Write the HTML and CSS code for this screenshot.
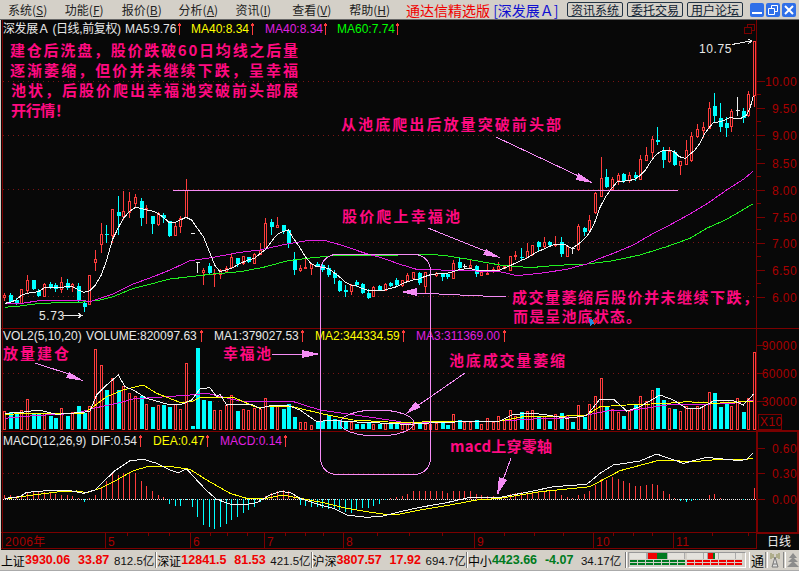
FILE: index.html
```html
<!DOCTYPE html>
<html lang="zh-CN">
<head>
    <meta charset="UTF-8">
    <title>通达信精选版 - 深发展A</title>
    <link rel="stylesheet" href="styles.css">
</head>
<body>

<div class="app">

    <!-- Menu and title bar -->
    <div class="menubar">
        <div class="menu">
            <span>系统(<u>S</u>)</span>
            <span>功能(<u>F</u>)</span>
            <span>报价(<u>B</u>)</span>
            <span>分析(<u>A</u>)</span>
            <span>资讯(<u>I</u>)</span>
            <span>查看(<u>V</u>)</span>
            <span>帮助(<u>H</u>)</span>
        </div>
        <div class="title"><b>通达信精选版</b> <em>[深发展Ａ]</em></div>
        <div class="links">
            <button>资讯系统</button>
            <button>委托交易</button>
            <button>用户论坛</button>
        </div>
        <div class="winbtns">
            <span class="winbtn"><svg width="14" height="14"><rect x="2" y="9" width="10" height="2" fill="#fff"/></svg></span>
            <span class="winbtn"><svg width="14" height="14"><path d="M5.5 5.5V2.5H11.5V8.5H9M2.5 5.5H8.500V11.500H2.500Z" fill="none" stroke="#fff"/></svg></span>
            <span class="winbtn close"><svg width="14" height="14"><path d="M3 3L11 11M11 3L3 11" stroke="#fff" stroke-width="2"/></svg></span>
        </div>
    </div>

    <!-- Chart panes: coordinates in the viewBox are page pixels -->
    <svg id="chart" class="chart" width="798" height="530" viewBox="1 20 798 530">
        <defs>
            <path id="up" d="M0.5 -5V6M-1.5 -2.500L0.5 -5L2.500 -2.500" class="uparrow"/>
        </defs>

        <g id="grid"></g>
        <g id="panes"></g>

        <!-- Pane headers -->
        <text x="3" y="33" class="hd white zh" textLength="118">深发展Ａ (日线,前复权)</text>
        <text x="125" y="33" class="hd white">MA5:9.76</text><use href="#up" x="179" y="29"/>
        <text x="191" y="33" class="hd yellow">MA40:8.34</text><use href="#up" x="252" y="29"/>
        <text x="265" y="33" class="hd magenta">MA40:8.34</text><use href="#up" x="325" y="29"/>
        <text x="337" y="33" class="hd green">MA60:7.74</text><use href="#up" x="397" y="29"/>

        <text x="3" y="340" class="hd white">VOL2(5,10,20)</text>
        <text x="86" y="340" class="hd white">VOLUME:820097.63</text><use href="#up" x="201" y="336"/>
        <text x="214" y="340" class="hd white">MA1:379027.53</text><use href="#up" x="302" y="336"/>
        <text x="315" y="340" class="hd yellow">MA2:344334.59</text><use href="#up" x="403" y="336"/>
        <text x="416" y="340" class="hd magenta">MA3:311369.00</text><use href="#up" x="504" y="336"/>

        <text x="3" y="445" class="hd white">MACD(12,26,9)</text>
        <text x="91" y="445" class="hd white">DIF:0.54</text><use href="#up" x="140" y="441"/>
        <text x="153" y="445" class="hd yellow">DEA:0.47</text><use href="#up" x="207" y="441"/>
        <text x="220" y="445" class="hd magenta">MACD:0.14</text><use href="#up" x="285" y="441"/>

        <!-- Price marks -->
        <text x="699" y="53" class="mark">10.75</text>
        <path d="M732 44.500L745 42L752 41M748 39L752 41L748 44" class="markline"/>
        <text x="39" y="320" class="mark">5.73</text>
        <path d="M63 315.500H82M78 313L82 315.500L78 318" class="markline"/>

        <!-- Annotations drawn on the chart -->
        <path d="M173 190.500H678" class="pen"/>
        <rect x="320.500" y="254.500" width="110" height="220" rx="16" class="pen"/>
        <ellipse cx="377" cy="423" rx="37" ry="13" class="pen"/>
        <path d="M496 137L585 179M428 228L495 255M506 297L460 295L417 293M35 363L75 376M272 354H305M465 373L410 411M511 458L498 494M417 294H412" class="pen"/>
        <polygon points="593,183 578,173 576,180" class="penhead"/>
        <polygon points="501,258 486,249 483,255" class="penhead"/>
        <polygon points="401,292 417,288 417,296" class="penhead"/>
        <polygon points="84,381 69,372 66,378" class="penhead"/>
        <polygon points="320,354 302,350 302,358" class="penhead"/>
        <polygon points="406,414 415,402 421,407" class="penhead"/>
        <polygon points="497,495 499,477 507,480" class="penhead"/>

        <text x="10" y="56" class="note" textLength="288">建仓后洗盘，股价跌破60日均线之后量</text>
        <text x="10" y="76" class="note" textLength="288">逐渐萎缩，但价并未继续下跌，呈幸福</text>
        <text x="11" y="96" class="note" textLength="287">池状，后股价爬出幸福池突破前头部展</text>
        <text x="11" y="116" class="note" textLength="59">开行情！</text>
        <text x="341" y="130" class="note" textLength="220">从池底爬出后放量突破前头部</text>
        <text x="342" y="222" class="note" textLength="118">股价爬上幸福池</text>
        <text x="512" y="303" class="note" textLength="246">成交量萎缩后股价并未继续下跌，</text>
        <text x="513" y="322" class="note" textLength="128">而是呈池底状态。</text>
        <text x="3" y="359" class="note" textLength="66">放量建仓</text>
        <text x="223" y="359" class="note" textLength="48">幸福池</text>
        <text x="449" y="366" class="note" textLength="116">池底成交量萎缩</text>
        <text x="450" y="452" class="note" textLength="102">macd上穿零轴</text>

        <polygon points="589,318 596,322 590,326" class="cursor-blue"/>
        <polygon points="593,319 598,321 594,325" class="cursor-red"/>

        <!-- Restore icon over the axis -->
        <path d="M747.500 27.500V24.500H754.500V30.500H751.500M744.500 27.500H751.500V33.500H744.500Z" class="restore"/>

        <text x="767" y="546" class="period">日线</text>
    </svg>

    <!-- Index status bar -->
    <div class="statusbar">
        <div class="idx"><span class="name">上证</span><b class="n1">3930.06</b><b class="n2">33.87</b><span class="amt">812.5亿</span></div>
        <div class="idx"><span class="name">深证</span><b class="n1">12841.5</b><b class="n2">81.53</b><span class="amt">421.5亿</span></div>
        <div class="idx"><span class="name">沪深</span><b class="n1">3807.57</b><b class="n2">17.92</b><span class="amt">694.7亿</span></div>
        <div class="idx idx-sz"><span class="name">中小</span><b class="n1">4423.66</b><b class="n2">-4.07</b><span class="amt">34.17亿</span></div>

        <div class="breadth">
            <div class="meter">
                <div class="cells"><i class="c1"></i><i class="c2"></i><i class="r1"></i><i class="g1"></i><i class="c2"></i><i class="c1"></i></div>
                <div class="dash dgreen"></div>
                <div class="dash dgreen"></div>
            </div>
            <div class="meter">
                <div class="cells"><i class="c1"></i><i class="c3"></i><i class="r2"></i><i class="g2"></i><i class="c3"></i><i class="c1"></i></div>
                <div class="dash dred"></div>
                <div class="dash dred"></div>
            </div>
        </div>

        <span class="tool tong">通</span>
        <span class="tool"><svg width="14" height="16"><path d="M7 5L4 15H10ZM5 12H9" fill="#ddd" stroke="#777"/><path d="M3 1V7M11 1V7M5 2V6M9 2V6" stroke="#8a8a50"/></svg></span>
        <span class="tool"><svg width="14" height="16"><path d="M7 1L11 6H3ZM7 5L12 10H2ZM7 9L13 15H1Z" fill="#8c8c8c"/></svg></span>
        <span class="tool last"><svg width="5" height="16"><path d="M2.500 1V14" stroke="#006"/><rect x="1" y="3" width="3" height="5" fill="#00c"/></svg></span>
    </div>
</div>

<script src="script.js"></script>
</body>
</html>
```

FILE: styles.css
```css
/* Basic Styling */
body {
    margin: 0;
    background-color: #fff;
    font-family: "Liberation Sans", "Noto Sans CJK SC", sans-serif;
    font-size: 12px;
    color: #000;
}

.app {
    width: 799px;
    height: 570px;
    display: flex;
    flex-direction: column;
    background-color: #d4d0c8;
    border-bottom: 1px solid #aaa;
    overflow: hidden;
}

/* Menu and title bar */
.menubar {
    height: 19px;
    flex: none;
    display: flex;
    align-items: center;
    border-bottom: 1px solid #666;
}

.menu {
    width: 406px;
    display: flex;
    padding-left: 8px;
    box-sizing: border-box;
}

.menu span {
    width: 57px;
    font-family: "Noto Sans CJK SC", sans-serif;
    font-size: 12px;
    white-space: nowrap;
    color: #222;
}

.title {
    width: 161px;
    font-family: "Noto Sans CJK SC", sans-serif;
    font-size: 14px;
    white-space: nowrap;
}

.title b {
    font-weight: normal;
    color: #f00000;
}

.title em {
    font-style: normal;
    color: #1010d0;
}

.links {
    display: flex;
    gap: 4px;
    width: 183px;
}

.links button {
    width: 56px;
    height: 15px;
    padding: 0;
    font-family: "Noto Sans CJK SC", sans-serif;
    font-size: 12px;
    line-height: 13px;
    color: #123;
    background-color: #d4d0c8;
    border: 1px solid #234;
    border-radius: 2px;
}

.winbtns {
    display: flex;
    gap: 2px;
}

.winbtn {
    width: 14px;
    height: 14px;
    display: block;
    background-color: #2f6fe8;
    border-radius: 2px;
}

/* Chart */
.chart {
    display: block;
    flex: none;
    margin-left: 1px;
    background-color: #080808;
    shape-rendering: crispEdges;
}

.chart text {
    font-family: "Liberation Sans", "Noto Sans CJK SC", sans-serif;
}

.hd {
    font-size: 12px;
}

.white { fill: #e8e8e8; }
.yellow { fill: #ffff00; }
.magenta { fill: #e020e0; }
.green { fill: #00ff00; }

.uparrow {
    fill: none;
    stroke: #ff3c3c;
}

.mark {
    font-size: 12px;
    letter-spacing: 0.6px;
    fill: #e8e8e8;
}

.markline {
    fill: none;
    stroke: #e8e8e8;
}

.pen {
    fill: none;
    stroke: #f58cf5;
}

.penhead {
    fill: #f58cf5;
}

.chart .note {
    font-family: "Noto Sans CJK SC", sans-serif;
    font-size: 15px;
    font-weight: 700;
    fill: #ff0a80;
}

.cursor-blue { fill: #2090e0; }
.cursor-red { fill: #e02020; }

.restore {
    fill: none;
    stroke: #7a0000;
}

.chart .period {
    font-family: "Noto Sans CJK SC", sans-serif;
    font-size: 12px;
    fill: #eee;
}

/* Drawn by script.js */
.sep { stroke: #7a0000; fill: none; }
.box { stroke: #7a0000; stroke-width: 2; fill: none; }
.dots { stroke: #7a1414; stroke-dasharray: 1 4; }
.zero { stroke: #eee; stroke-dasharray: 1 1; }
.tick { stroke: #7a0000; }
.axis { font-size: 12px; letter-spacing: 0.4px; fill: #a80000; }
.stick { stroke: #ff3c3c; fill: none; }
.body-r { stroke: #ff3c3c; fill: #080808; }
.body-c { fill: #00ffff; stroke: none; }
.stick-c { stroke: #00ffff; }
.stick-w { stroke: #f0f0f0; }
.ln { fill: none; stroke-width: 1; }
.ln-w { stroke: #f4f4f4; }
.ln-y { stroke: #ffff00; }
.ln-m { stroke: #e020e0; }
.ln-g { stroke: #20f020; }

/* Status bar */
.statusbar {
    flex: 1;
    display: flex;
    align-items: center;
    padding-left: 1px;
    white-space: nowrap;
}

.idx {
    width: 155.300px;
    height: 16px;
    display: flex;
    align-items: center;
    flex: none;
    border-right: 1px solid #777;
    box-shadow: 1px 0 0 #fff;
    box-sizing: border-box;
}

.idx + .idx {
    padding-left: 1px;
}

.idx-sz { width: 159px; }

.name {
    width: 24px;
    font-family: "Noto Sans CJK SC", sans-serif;
    font-size: 12px;
    letter-spacing: -0.2px;
}

.n1 {
    width: 53px;
    font-size: 12.500px;
    color: #f00000;
}

.n2 {
    width: 36px;
    font-size: 12.500px;
    color: #f00000;
}

.amt {
    font-size: 11.500px;
    color: #111;
}

.idx-sz b {
    color: #007a20;
}

.breadth {
    width: 114px;
    height: 14px;
    margin-left: 2px;
    padding: 0 1px;
    flex: none;
    display: flex;
    gap: 2px;
    border: 1px solid #999;
    border-right-color: #fff;
    border-bottom-color: #fff;
}

.meter {
    width: 55px;
}

.cells {
    height: 6px;
    display: flex;
    background-color: #e4e2dc;
}

.cells i { display: block; border-right: 1px solid #aaa; box-sizing: border-box; }
.c1 { width: 17px; }
.c2 { width: 1px; }
.c3 { width: 4px; }
.r1 { width: 9px; background-color: #f00000; border: 0 !important; }
.g1 { width: 10px; background-color: #007a20; border: 0 !important; }
.r2 { width: 5px; background-color: #f00000; border: 0 !important; }
.g2 { width: 2px; background-color: #007a20; border: 0 !important; }

.dash {
    height: 2px;
    margin-top: 1px;
}

.dgreen { background: repeating-linear-gradient(90deg, #007a20 0 7px, transparent 7px 8px); }
.dred { background: repeating-linear-gradient(90deg, #f00000 0 7px, transparent 7px 8px); }

.tool {
    width: 15px;
    height: 16px;
    margin-left: 1px;
    display: flex;
    align-items: center;
    justify-content: center;
    flex: none;
    border-left: 1px solid #fff;
    border-right: 1px solid #888;
}

.tong {
    margin-left: 3px;
    font-family: "Noto Sans CJK SC", sans-serif;
    font-size: 13px;
}

.last {
    width: 5px;
    margin-left: 2px;
    border-right: 0;
}
```

FILE: script.js
```js
// Chart data is kept in 3x pixel units: x = offset + v / 3, y = top + v / 3
const NS = 'http://www.w3.org/2000/svg';
const grid = document.getElementById('grid');
const panes = document.getElementById('panes');

function add(parent, tag, attrs, text) {
    const el = document.createElementNS(NS, tag);
    for (const key in attrs) el.setAttribute(key, attrs[key]);
    if (text) el.textContent = text;
    parent.appendChild(el);
    return el;
}

function hline(y, x1, x2, cls) {
    add(grid, 'line', { x1: x1, x2: x2, y1: y + 0.5, y2: y + 0.5, class: cls });
}

function vline(x, y1, y2, cls) {
    add(grid, 'line', { x1: x + 0.5, x2: x + 0.5, y1: y1, y2: y2, class: cls });
}

// Frame, dotted grid and axes
[81, 135, 189, 242, 296, 373, 401, 473].forEach(y => hline(y, 3, 756, 'dots'));
hline(499, 3, 756, 'zero');
hline(328, 1, 799, 'sep');
hline(431, 1, 757, 'sep');
hline(532, 1, 799, 'sep');
hline(548, 1, 757, 'sep');
vline(2, 20, 549, 'sep');
vline(756, 20, 549, 'sep');
add(grid, 'rect', { x: 757, y: 431, width: 41, height: 102, class: 'box' });

// Price, volume and MACD scales
const scales = [
    ['10.00', 81], ['9.50', 108], ['9.00', 135], ['8.50', 163], ['8.00', 190],
    ['7.50', 217], ['7.00', 243], ['6.50', 270], ['6.00', 297],
    ['90000', 345], ['60000', 373], ['30000', 401],
    ['0.60', 448], ['0.30', 473], ['0.00', 499]
];
scales.forEach(([label, y]) => {
    add(grid, 'text', { x: 797, y: y + 5, 'text-anchor': 'end', class: 'axis' }, label);
    hline(y, 757, 765, 'tick');
    if (y < 300 && y > 90) hline(y - 14, 757, 761, 'tick');
});
add(grid, 'rect', { x: 758.5, y: 414.5, width: 23, height: 15, class: 'sep' });
add(grid, 'text', { x: 760, y: 426, class: 'axis' }, 'X10');

// Date axis
const months = [['2006年', 2, 0], ['5', 105], ['6', 190], ['7', 264], ['8', 343], ['9', 474], ['10', 593], ['11', 673]];
months.forEach(([label, x]) => {
    if (x > 2) vline(x, 533, 548, 'tick');
    add(grid, 'text', { x: x + 3, y: 546, class: 'axis' }, label);
});
[127, 148, 169, 210, 227, 247, 285, 305, 323, 377, 409, 442, 504, 534, 563, 613, 633, 652, 712, 748]
    .forEach(x => vline(x, 533, 536, 'tick'));

const xAt = i => Math.round(3.2 + i * 5.68);

// Candles: type, body top, body bottom, high, low (y in 3x units from y=130)
const candles = [
    'r,495,503,488,512', 'c,495,515,488,520', 'c,510,520,505,525', 'r,478,520,478,520', 'r,450,480,435,490',
    'c,450,478,450,480', 'c,482,497,478,500', 'r,462,500,460,500', 'c,462,470,455,478', 'c,465,478,460,485',
    'r,457,477,442,490', 'c,460,473,448,480', 'r,462,468,458,485', 'c,468,510,460,520', 'c,518,530,515,545',
    'r,436,523,436,523', 'r,388,398,360,422', 'r,312,342,280,368', 'c,312,316,285,340', 'r,238,315,238,340',
    'c,245,258,198,315', 'r,245,260,183,270', 'r,213,248,185,265', 'r,202,220,192,230', 'c,212,265,205,288',
    'r,236,238,225,282', 'c,258,283,258,312', 'r,250,283,245,288', 'c,255,265,250,278', 'c,272,318,272,320',
    'r,288,317,280,318', 'r,265,290,258,310', 'r,180,262,148,262', 'w,310,310,310,310', 'w,398,398,398,425',
    'r,420,428,415,465', 'c,408,430,400,435', 'r,430,432,418,470', 'r,422,432,418,446', 'r,414,424,408,428',
    'r,382,413,370,414', 'c,385,403,385,410', 'r,380,400,378,405', 'c,382,395,380,398', 'r,373,400,370,402',
    'r,360,372,338,372', 'r,280,355,265,358', 'c,276,290,268,315', 'r,286,292,262,295', 'c,285,303,285,312',
    'c,300,342,298,355', 'c,388,420,367,435', 'r,414,420,405,425', 'r,412,415,388,418', 'r,402,415,398,435',
    'c,402,408,395,412', 'c,405,420,400,425', 'c,415,435,405,440', 'c,430,445,420,462', 'c,452,483,450,485',
    'c,480,487,465,500', 'r,465,485,462,495', 'c,456,465,450,470', 'c,462,490,458,492', 'c,490,505,478,507',
    'r,472,500,468,500', 'c,468,480,465,482', 'r,462,480,460,482', 'c,458,468,455,470', 'c,450,465,445,470',
    'r,452,465,450,470', 'r,435,450,428,455', 'r,428,445,425,450', 'c,428,460,425,465', 'r,428,470,428,490',
    'w,432,432,422,440', 'r,430,436,425,440', 'c,432,440,430,452', 'c,432,442,430,448', 'r,400,445,390,445',
    'c,397,415,385,418', 'w,408,408,402,415', 'r,405,412,390,415', 'c,408,432,405,440', 'r,426,435,420,438',
    'r,430,431,402,432', 'r,418,422,410,430', 'r,410,418,395,422', 'r,408,414,404,416', 'r,378,422,378,422',
    'r,377,380,362,390', 'c,380,385,355,392', 'r,365,382,338,385', 'r,347,372,345,378', 'c,337,350,333,362',
    'r,337,350,322,358', 'c,335,345,333,350', 'r,342,345,318,350', 'c,335,372,322,382', 'r,350,378,345,380',
    'w,355,355,350,368', 'r,290,358,282,362', 'c,293,305,290,318', 'r,270,302,255,305', 'r,190,248,185,252',
    'r,145,198,80,200', 'c,142,172,118,175', 'r,148,178,142,180', 'r,135,152,130,165', 'c,132,152,130,160',
    'r,135,152,125,160', 'c,135,145,125,152', 'r,88,148,75,150', 'r,76,90,50,92', 'r,28,68,18,85',
    'c,30,35,-10,45', 'c,62,90,52,115', 'r,65,95,50,100', 'c,65,105,60,108', 'r,95,105,92,135',
    'r,62,102,30,105', 'r,20,90,5,95', 'r,-2,20,-18,25', 'r,-7,0,-25,25', 'r,-65,-5,-85,-2',
    'c,-72,-43,-110,-20', 'c,-35,-10,-80,5', 'c,-20,-7,-40,20', 'r,-55,-10,-62,5', 'w,-60,-60,-98,-45',
    'c,-57,-37,-65,-22', 'r,-108,-45,-118,-40', 'r,-267,-105,-267,-69'
];

// Volume bar tops from y=325, negative is a cyan bar
const volumes = [
    258, -262, -265, 255, 222, -265, -268, 265, -272, -278, 250, -272, 262, -243, -265, 245, 72, 120, -195, 160,
    -195, 183, 205, 213, -213, 237, -245, 240, -240, -245, 238, 252, 115, -303, -68, -225, -228, 255, 255, 240,
    210, -258, 252, 255, 250, 252, 220, -245, 240, -252, -238, -275, 293, 292, 300, -290, -288, -270, -282, -285,
    -290, 292, -298, -298, -295, 298, -298, 296, -295, -295, 295, 295, 295, -295, 297, 297, 295, -290, -300, 268,
    -284, 292, 292, -286, 298, 280, 292, 274, 285, 255, 275, -262, 258, 255, -276, 274, -288, 268, -265, 272,
    -290, 240, -275, 238, 213, 160, -245, 252, 262, -273, 258, -240, 213, 228, 195, -190, -225, 250, -252, 260,
    245, 250, 245, 245, 202, -205, -245, -232, 243, 220, -260, 220, 82
];

// MACD sticks measured from the zero line, in 3x units
const macd = [
    13, 11, 10, 13, 20, 23, 23, 21, 18, 15, 13, 11, 8, 3, -10, 3, 13, 33, 53, 76,
    73, 78, 78, 78, 55, 40, 23, 13, 5, -14, -20, -20, -4, -24, -54, -77, -84, -89, -85, -75,
    -64, -54, -42, -32, -25, -10, 8, 18, 23, 28, 25, 10, -17, -20, -25, -24, -27, -30, -27, -32,
    -40, -42, -30, -27, -27, -20, -14, -4, 3, 6, 8, 16, 23, 23, 23, 25, 25, 23, 18, 25,
    25, 25, 25, 15, 13, 10, 8, 5, 10, 15, 18, 20, 21, 23, 23, 23, 23, 23, 13, 5,
    3, 13, 15, 23, 43, 61, 58, 65, 61, 55, 48, 38, 40, 41, 45, 43, 25, 16, 2, -7,
    -10, -5, -2, 1, 13, 15, 3, 1, 1, 0, -4, 1, 33
];

function stick(x, y1, y2, cls) {
    add(panes, 'line', { x1: x + 1.5, x2: x + 1.5, y1: y1, y2: y2, class: cls });
}

candles.forEach((row, i) => {
    const [type, ...nums] = row.split(',');
    const [top, bot, hi, lo] = nums.map(v => 130 + Number(v) / 3);
    const x = xAt(i);
    if (type === 'w') {
        stick(x, hi, lo + 1, 'stick-w');
        add(panes, 'line', { x1: x - 0.5, x2: x + 3.5, y1: top, y2: top, class: 'stick-w' });
    } else if (type === 'r') {
        stick(x, hi, top, 'stick');
        stick(x, bot, lo, 'stick');
        add(panes, 'rect', { x: x + 0.5, y: top, width: 2, height: Math.max(bot - top, 1), class: 'body-r' });
    } else {
        stick(x, hi, lo, 'stick-c');
        add(panes, 'rect', { x: x, y: top, width: 4, height: Math.max(bot - top, 1), class: 'body-c' });
    }
});

volumes.forEach((v, i) => {
    const x = xAt(i);
    const top = 325 + Math.abs(v) / 3;
    if (v < 0) add(panes, 'rect', { x: x, y: top, width: 4, height: 429 - top, class: 'body-c' });
    else add(panes, 'rect', { x: x + 0.5, y: top, width: 2, height: 429 - top, class: 'body-r' });
});

macd.forEach((v, i) => {
    stick(xAt(i), 499, 499 - v / 3, v < 0 ? 'stick-c' : 'stick');
});

// Two flat point lists: left half of the chart, then the right half starting at x=400
function line(left, right, top, cls) {
    const pts = [];
    for (let i = 0; i < left.length; i += 2) pts.push((left[i] / 3) + ',' + (top + left[i + 1] / 3));
    for (let i = 0; i < right.length; i += 2) pts.push((400 + right[i] / 3) + ',' + (top + right[i + 1] / 3));
    add(panes, 'polyline', { points: pts.join(' '), class: 'ln ' + cls });
}

// Price averages
line([14,532,60,528,120,520,250,516,300,510,340,500,400,475,460,460,510,447,570,440,640,432,720,425,790,412,860,393,920,385,990,378,1060,376,1200,375],
     [60,372,130,376,200,387,300,405,390,413,470,406,560,402,640,392,720,375,800,350,870,325,920,295,980,268,1058,222], 130, 'ln-g');
line([14,522,65,520,125,511,245,511,270,515,300,505,340,492,400,462,460,440,510,420,570,392,640,382,720,367,780,360,860,342,920,332,970,330,1030,347,1090,368,1150,385,1200,403],
     [30,412,50,418,300,425,350,437,420,430,500,418,560,402,600,385,640,370,700,345,760,310,800,290,870,252,920,222,980,180,1030,148,1058,125], 130, 'ln-m');
line([14,520,31,517,48,510,65,495,82,490,100,487,116,485,133,473,150,472,184,472,202,470,218,470,235,480,252,487,268,483,286,465,304,435,320,390,337,330,354,295,370,265,388,245,406,232,422,235,440,240,457,243,473,250,490,262,508,278,523,278,541,270,558,262,575,270,592,295,610,320,626,360,644,405,660,425,677,420,695,415,712,405,728,397,745,390,763,385,779,372,797,358,814,335,830,315,847,305,865,300,880,325,898,350,916,380,932,400,950,410,968,412,984,415,1002,428,1018,440,1034,455,1052,465,1070,468,1085,475,1102,480,1154,480,1172,475,1190,470],
     [0,465,22,455,40,450,56,447,73,440,90,435,108,432,142,430,158,425,175,420,192,417,208,415,226,420,295,422,311,415,328,408,345,400,362,392,379,385,396,375,412,365,430,358,446,350,463,344,498,345,514,355,532,345,549,330,566,312,583,280,601,230,617,200,635,175,652,155,686,152,703,148,719,138,736,120,754,92,770,72,788,62,805,60,822,65,838,80,856,85,873,70,885,60,900,40,915,10,930,-10,940,-22,960,-25,975,-30,990,-38,1005,-35,1023,-35,1040,-45,1050,-65,1060,-102], 130, 'ln-w');

// Volume averages
line([14,280,100,272,230,265,280,250,350,235,400,222,500,215,570,210,620,205,720,228,880,230,960,255,1100,275,1200,290],
     [0,295,170,290,300,288,400,282,520,278,620,258,700,255,800,240,900,238,1000,235,1060,225], 325, 'ln-m');
line([14,270,60,265,170,265,250,265,280,245,320,215,370,195,430,180,470,205,540,232,575,230,600,218,700,217,770,247,870,243,960,265,1060,285,1200,293],
     [170,288,300,288,370,275,500,273,560,270,600,245,680,240,800,235,860,230,940,235,1000,232,1060,228], 325, 'ln-y');
line([14,265,65,262,100,257,130,258,170,268,250,262,270,258,290,210,320,180,355,150,375,185,400,195,440,220,500,237,540,240,575,225,600,192,630,188,650,215,660,208,680,240,700,238,760,240,780,250,820,240,860,240,900,255,950,290,1000,285,1040,290,1100,292,1200,297],
     [40,297,120,292,300,288,340,268,400,265,440,270,500,280,560,272,600,222,640,222,680,258,720,245,780,210,820,225,860,250,900,250,940,228,1000,227,1030,240,1060,208], 325, 'ln-w');

// MACD lines
line([14,207,100,195,180,185,230,183,260,188,300,175,350,150,400,122,450,108,500,108,570,118,620,150,690,190,740,205,800,205,850,195,900,205,980,220,1040,235,1100,245,1150,252,1200,252],
     [60,240,150,225,230,210,300,205,420,185,520,175,570,170,660,122,780,90,880,95,960,88,1020,90,1058,85], 430, 'ln-y');
line([14,205,60,200,80,187,140,182,210,182,250,190,285,180,310,155,345,122,390,92,430,88,470,100,510,120,535,128,560,117,590,150,620,182,650,208,690,222,730,225,770,218,810,195,840,185,870,187,900,205,950,222,1000,235,1040,255,1100,262,1150,258,1200,245],
     [60,232,140,218,210,202,300,202,400,183,460,170,560,163,600,130,640,105,720,93,770,72,850,100,920,82,1020,92,1040,88,1058,70], 430, 'ln-w');
```
